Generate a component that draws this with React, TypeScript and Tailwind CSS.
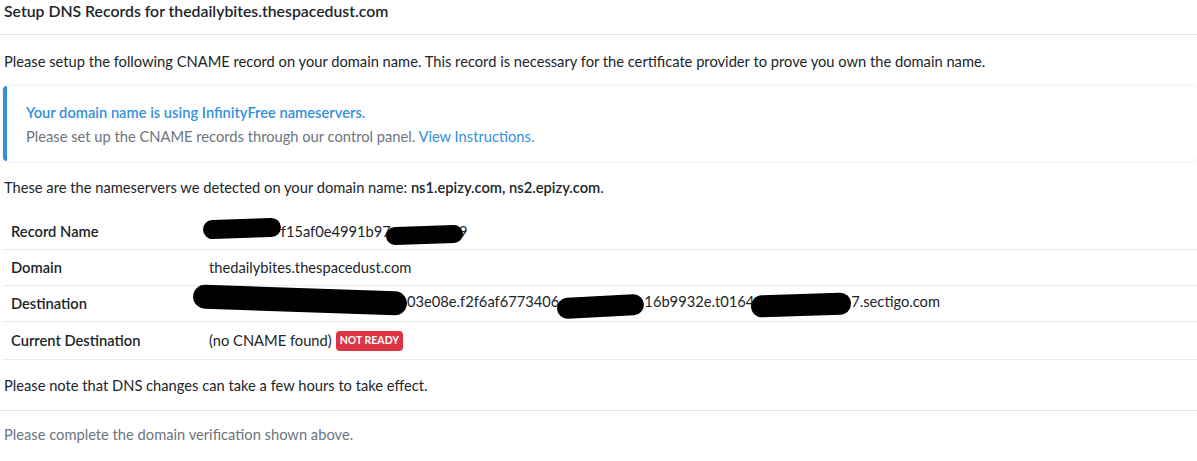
const rows = [
  { label: 'Record Name', key: 'record' },
  { label: 'Domain', key: 'domain' },
  { label: 'Destination', key: 'dest' },
  { label: 'Current Destination', key: 'current' },
];

function Blob({ className }: { className: string }) {
  return <span className={`inline-block bg-black rounded-full align-middle ${className}`}></span>;
}

function Value({ k }: { k: string }) {
  if (k === 'record') {
    return (
      <span className="whitespace-nowrap">
        _<Blob className="w-[78px] h-[19px] ml-[-13px] relative top-[-4px] -rotate-2" />
        f15af0e4991b97
        <Blob className="w-[77px] h-[18px] ml-[-5px] relative top-[2px] -rotate-2" />
        <span className="ml-[-4px]">9</span>
      </span>
    );
  }
  if (k === 'domain') return <span>thedailybites.thespacedust.com</span>;
  if (k === 'dest') {
    return (
      <span className="whitespace-nowrap">
        <Blob className="w-[214px] h-[24px] ml-[-16px] relative top-[-4px] rotate-2" />
        03e08e.f2f6af6773406
        <Blob className="w-[87px] h-[21px] ml-[-2px] relative top-[3px] -rotate-3" />
        16b9932e.t0164
        <Blob className="w-[100px] h-[22px] ml-[-3px] relative top-[1px] -rotate-2" />
        7.sectigo.com
      </span>
    );
  }
  return (
    <span className="flex items-center gap-[4px]">
      (no CNAME found)
      <span className="inline-flex items-center h-[20px] px-[4px] rounded-[4px] bg-[#dc3545] text-white text-[10.5px] font-bold leading-none">
        NOT READY
      </span>
    </span>
  );
}

export default function App() {
  return (
    <div className="w-[1197px] h-[461px] bg-white text-[#212529] text-[14.7px] leading-[21px] font-['Lato','Liberation_Sans',sans-serif] overflow-hidden">
      <div className="h-[35px] border-b border-[#e6e6e6] pl-[4px]">
        <h5 className="text-[15.8px] leading-[21px] font-semibold">Setup DNS Records for thedailybites.thespacedust.com</h5>
      </div>

      <p className="mt-[16px] pl-[4px]">
        Please setup the following CNAME record on your domain name. This record is necessary for the certificate provider to prove you own the domain name.
      </p>

      <div className="mt-[14px] ml-[3px] border-l-4 border-[#3490dc] rounded-[4px] bg-white shadow-[0_0_3px_rgba(0,0,0,0.12)] pt-[14px] pb-[13px] pl-[19px]">
        <div className="text-[#3490dc] font-semibold leading-[24px]">Your domain name is using InfinityFree nameservers.</div>
        <div className="text-[#6c757d] leading-[24px]">
          Please set up the CNAME records through our control panel.{' '}
          <span className="text-[#3490dc]">View Instructions.</span>
        </div>
      </div>

      <p className="mt-[16px] pl-[4px]">
        These are the nameservers we detected on your domain name:{' '}
        <span className="font-semibold">ns1.epizy.com, ns2.epizy.com</span>.
      </p>

      <div className="mt-[16px] ml-[3px]">
        {rows.map((r) => (
          <div
            key={r.key}
            className={`flex items-center border-b border-[#ebebeb] px-[8px] ${r.key === 'current' ? 'h-[38px]' : 'h-[36px]'}`}
          >
            <div className="w-[198px] font-semibold">{r.label}</div>
            <div className="flex-1">
              <Value k={r.key} />
            </div>
          </div>
        ))}
      </div>

      <div className="border-b border-[#e6e6e6] pl-[4px] pt-[15px] pb-[14px]">
        Please note that DNS changes can take a few hours to take effect.
      </div>

      <p className="mt-[13px] pl-[4px] text-[#6c757d]">Please complete the domain verification shown above.</p>
    </div>
  );
}
